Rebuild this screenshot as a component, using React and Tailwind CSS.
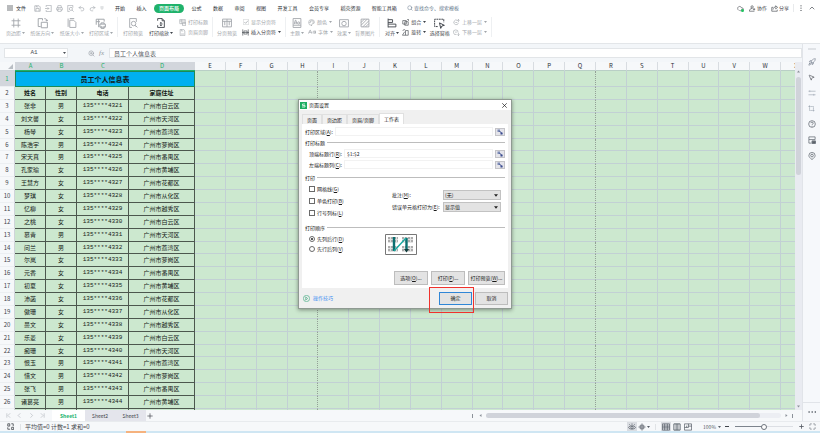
import clsx from 'clsx'
import { CaseSensitive, ChevronUp, CloudCheck, Maximize, MousePointer2, Palette, Printer, Redo2, Rocket, Search, Undo2, ZoomIn } from 'lucide-react'

const names = [
  ['张非', '男'], ['刘文馨', '女'], ['杨琴', '女'], ['陈浩宇', '男'], ['宋天真', '男'], ['孔家瑜', '女'],
  ['王慧方', '女'], ['梦琪', '女'], ['忆柳', '女'], ['之桃', '女'], ['慕青', '男'], ['问兰', '男'],
  ['尔岚', '女'], ['元香', '女'], ['初夏', '女'], ['沛菡', '女'], ['傲珊', '女'], ['曼文', '女'],
  ['乐菱', '女'], ['痴珊', '女'], ['恨玉', '男'], ['惜文', '男'], ['张飞', '男'], ['诸葛亮', '男'],
]
const districts = ['白云', '天河', '荔湾', '萝岗', '番禺', '黄埔', '花都', '从化', '越秀']
const rows = names.map(([name, sex], i) => [name, sex, `135****${4321 + i}`, `广州市${districts[i % 9]}区`])
const columns = 'ABCDEFGHIJKLMNOPQRSTUVWX'.split('')
const emptyColumns = columns.slice(4)

function Glyph({ children, className = 'size-[9px]', box = 18 }) {
  return (
    <svg viewBox={`0 0 ${box} ${box}`} className={clsx('shrink-0', className)} fill="none" stroke="currentColor" strokeWidth="1.6" aria-hidden="true">
      {children}
    </svg>
  )
}

function Caret() {
  return (
    <svg viewBox="0 0 6 4" className="h-[2px] w-[3px] shrink-0" aria-hidden="true">
      <path d="M0 0h6L3 4z" fill="currentColor" />
    </svg>
  )
}

const icons = {
  margins: <Glyph className="size-[10px]"><path d="M5 1v16M13 1v16M1 5h16M1 13h16" /></Glyph>,
  direction: <Glyph className="size-[11px]"><path d="M2 8V1h7v3M2 8v6h4M7 7h10v9H7zM12 1c3 0 4 1 4 4m-2-2 2 2 2-2" /></Glyph>,
  size: <Glyph className="size-[10px]"><path d="M5 4h7l4 4v9H5zM2 1v15M5 1h8" /></Glyph>,
  area: <Glyph className="size-[11px]"><path d="M2 11V2h13v4M2 6h6M6 2v13M8 10h9v5H8zM10 10V8h5v2M10 13v4h5v-4" /></Glyph>,
  preview: <Glyph className="size-[10px]"><path d="M15 7V1H3v16h4M15 16l-2-2" /><circle cx="10" cy="10" r="4" /><path d="m13 13 4 4" /></Glyph>,
  scale: <Glyph className="size-[10px]"><path d="M3 5V1h8l4 4v12H3v-4M11 1v4h4M9 8v6M7 10l2-2 2 2M7 12l2 2 2-2" /></Glyph>,
  pageBreak: <Glyph className="size-[10px]"><path d="M1 2h16v14H1zM9 2v14M1 6h16M5 6v7M13 6v7" /></Glyph>,
  theme: <Glyph className="size-[10px]"><path d="M2 1h14v16H2zM2 13h14M4 11l2-7h1l2 7M5 9h3" /><circle cx="12" cy="9" r="2" /></Glyph>,
  effect: <Glyph className="size-[10px]"><path d="M1 3h16v13H1z" /><circle cx="9" cy="10" r="4" /></Glyph>,
  background: <Glyph className="size-[10px]"><path d="M2 2h14v14H2zM2 8l6-6M2 13 13 2M5 16 16 5M10 16l6-6" /></Glyph>,
  align: <Glyph className="size-[10px]"><path d="M2 1v16M2 3h8v5H2M2 11h14v5H2" /></Glyph>,
  pane: <Glyph className="size-[11px]"><path d="M6 14H1V2h15v5" strokeDasharray="3 1" /><path d="m9 8 8 4-4 1-2 4z" /></Glyph>,
  headers: <Glyph className="size-[7px]"><path d="M2 1h14v11H2zM2 5h14M7 1v11M9 9h8v8H9z" /></Glyph>,
  footer: <Glyph className="size-[7px]"><path d="M3 1h9l3 4v12H3zM5 13h8M6 1v4h5" /></Glyph>,
  insert: <Glyph className="size-[7px]"><path d="M2 1v16M16 1v16M5 5h8v8H5zM0 9h18" /></Glyph>,
  group: <Glyph className="size-[7px]"><path d="M2 4h9v9H2zM7 7h9v9H7zM13 1h4v4" /></Glyph>,
  rotate: <Glyph className="size-[7px]"><path d="M9 4h7v12H9zM9 16H1l6-9M2 5c1-3 3-4 6-3" /></Glyph>,
  layerUp: <Glyph className="size-[7px]"><path d="M12 4a6 6 0 1 0 2 6M14 8V1M11 4l3-3 3 3M6 9h5" /></Glyph>,
  layerDown: <Glyph className="size-[7px]"><path d="M13 9a6 6 0 1 0-4 5M14 10v7M11 14l3 3 3-3M5 8h5" /></Glyph>,
}

function BigTool({ icon, label, menu, dark }) {
  return (
    <button type="button" className={clsx('flex flex-col items-center', dark ? 'text-[#3f444b]' : 'text-[#a2a6ab]')}>
      <span className="flex h-3 items-center">{icon}</span>
      <span className="flex h-2 items-center gap-px">{label}{menu && <Caret />}</span>
    </button>
  )
}

function SmallTool({ icon, label, menu, dark }) {
  return (
    <button type="button" className={clsx('flex h-[10px] items-center gap-[2px]', dark ? 'text-[#3f444b]' : 'text-[#a2a6ab]')}>
      {icon}{label}{menu && <Caret />}
    </button>
  )
}

function MenuBar() {
  const tabs = ['开始', '插入', '页面布局', '公式', '数据', '审阅', '视图', '开发工具', '会员专享', '稻壳资源', '智能工具箱']
  return (
    <div className="flex h-4 shrink-0 items-center pr-1 pl-[7px] text-[#2c3036]">
      <button type="button" className="flex items-center gap-[3px]">
        <Glyph className="size-[6px]"><path d="M0 3h18M0 9h18M0 15h18" strokeWidth="2" /></Glyph>文件
      </button>
      <div className="ml-[8px] flex w-[70px] items-center justify-between text-[#9da2a8]">
        <Glyph className="size-[7px]"><path d="M2 2h11l3 3v11H2zM5 16V9h8v7M6 2v3h5" /></Glyph>
        <Glyph className="size-[7px]"><path d="M3 5V1h13v16H3v-4M0 9h10M7 6l3 3-3 3" /></Glyph>
        <Printer className="size-[7px]" />
        <Glyph className="size-[7px]"><path d="M15 7V1H2v16h5M13 13l4 4" /><circle cx="10" cy="10" r="4" /></Glyph>
        <Undo2 className="size-[7px]" />
        <Redo2 className="size-[7px]" />
        <Glyph className="size-[4px]"><path d="M2 3h14M3 8h12l-6 8z" /></Glyph>
      </div>
      <nav className="ml-[11px] flex w-[282px] items-center justify-between">
        {tabs.map((tab) => (
          <button
            key={tab}
            type="button"
            className={clsx(tab === '页面布局' && '-mx-1 h-[9px] rounded-full bg-[#20b26b] px-[5px] font-medium text-white')}
          >
            {tab}
          </button>
        ))}
      </nav>
      <label className="ml-[10px] flex items-center gap-px text-[#64778b]">
        <Search className="size-[6px]" />
        <input aria-label="查找命令" placeholder="查找命令、搜索模板" className="w-16 outline-none placeholder:text-[#64778b]" />
      </label>
      <div className="ml-auto flex items-center gap-1 text-[#3f444b]">
        <span className="relative mr-px">
          <CloudCheck className="size-[7px]" />
          <span className="absolute right-0 bottom-0 size-[3px] rounded-full bg-[#22c05f]" />
        </span>
        <button type="button" className="flex items-center gap-px">
          <Glyph className="size-[7px]"><circle cx="8" cy="5" r="3" /><path d="M1 16c0-5 3-7 7-7M1 16h13M13 8v6M10 11h6" /></Glyph>协作
        </button>
        <button type="button" className="flex items-center gap-px">
          <Glyph className="size-[7px]"><path d="M6 6H2v10h14v-4M5 12c1-5 4-7 7-7V2l5 4-5 4V7" /></Glyph>分享
        </button>
        <span className="h-2 border-l border-[#e8eaec]" />
        <Glyph className="size-[6px]"><path d="M9 1v3M9 8v3M9 15v3" strokeWidth="3" /></Glyph>
        <ChevronUp className="size-[8px]" />
      </div>
    </div>
  )
}

function Ribbon() {
  return (
    <div className="flex h-7 shrink-0 items-start border-b border-[#e3e6e9] pt-px">
      <div className="flex w-[118px] justify-between border-r border-[#eef0f2] pr-1 pl-[6px]">
        <BigTool icon={icons.margins} label="页边距" menu />
        <BigTool icon={icons.direction} label="纸张方向" menu />
        <BigTool icon={icons.size} label="纸张大小" menu />
        <BigTool icon={icons.area} label="打印区域" menu />
      </div>
      <div className="flex w-[95px] justify-between border-r border-[#eef0f2] pr-1 pl-[5px]">
        <BigTool icon={icons.preview} label="打印预览" />
        <BigTool icon={icons.scale} label="打印缩放" menu dark />
        <div>
          <SmallTool icon={icons.headers} label="打印标题" />
          <SmallTool icon={icons.footer} label="页眉页脚" />
        </div>
      </div>
      <div className="flex w-[73px] justify-between border-r border-[#eef0f2] pr-1 pl-[4px]">
        <BigTool icon={icons.pageBreak} label="分页预览" />
        <div>
          <label className="flex h-[10px] items-center gap-[2px] pl-px text-[#a2a6ab]">
            <input type="checkbox" defaultChecked className="peer sr-only" />
            <Glyph className="size-[6px]"><path d="M1 1h16v16H1z" strokeWidth="1" /><path d="m4 9 4 4 7-8" strokeWidth="2.2" /></Glyph>
            显示分页符
          </label>
          <SmallTool icon={icons.insert} label="插入分页符" menu dark />
        </div>
      </div>
      <div className="flex w-[94px] justify-between border-r border-[#eef0f2] pr-1 pl-[4px]">
        <BigTool icon={icons.theme} label="主题" menu />
        <div>
          <SmallTool icon={<Palette className="size-[7px]" />} label="颜色" menu />
          <SmallTool icon={<CaseSensitive className="size-[8px]" />} label="字体" menu />
        </div>
        <BigTool icon={icons.effect} label="效果" menu />
        <BigTool icon={icons.background} label="背景图片" />
      </div>
      <div className="flex w-[112px] justify-between border-r border-[#eef0f2] pr-1 pl-[5px]">
        <BigTool icon={icons.align} label="对齐" menu dark />
        <div>
          <SmallTool icon={icons.group} label="组合" menu dark />
          <SmallTool icon={icons.rotate} label="旋转" menu dark />
        </div>
        <BigTool icon={icons.pane} label="选择窗格" dark />
        <div>
          <SmallTool icon={icons.layerUp} label="上移一层" menu />
          <SmallTool icon={icons.layerDown} label="下移一层" menu />
        </div>
      </div>
    </div>
  )
}

function FormulaBar() {
  return (
    <div className="flex h-[18px] shrink-0 items-center pl-1 text-[6px] text-[#4a4f56]">
      <div className="flex h-[10px] w-16 items-center border border-[#e2e5e8] bg-white pr-px">
        <input aria-label="名称框" defaultValue="A1" className="w-full min-w-0 text-center font-['Liberation_Mono',monospace] outline-none" />
        <Caret />
      </div>
      <div className="flex w-[41px] items-center justify-end gap-1 pr-[5px] text-[#9297a0]">
        <ZoomIn className="size-[7px]" />
        <span className="font-['Liberation_Serif',serif] text-[7px] italic">fx</span>
      </div>
      <input
        aria-label="编辑栏"
        defaultValue="员工个人信息表"
        className="h-[10px] min-w-0 flex-1 border border-[#e2e5e8] bg-white px-1 outline-none"
      />
    </div>
  )
}

// the printed page ends after these columns
const pageEdge = ['H', 'Q']

function EmptyCells() {
  return emptyColumns.map((col) => (
    <td
      key={col}
      className={clsx('border-r border-b border-[#c2d0d4]', pageEdge.includes(col) && 'border-r-[#93a096] [border-right-style:dotted]')}
    />
  ))
}

function RowHead({ n, active }) {
  return (
    <th className={clsx('border-r border-b border-r-[#cfd4da] border-b-[#eceff2] font-normal', active ? 'bg-[#d2d6dc] text-[#20b26b]' : 'bg-[#f6f8fa] text-[#3f444b]')}>
      {n}
    </th>
  )
}

function Sheet() {
  return (
    <table className="h-[360px] w-[812px] min-w-full table-fixed border-separate border-spacing-0 text-center text-[6px] leading-[8px] text-[#141a16]">
      <colgroup>
        <col className="w-[15px]" />
        <col className="w-[31px]" />
        <col className="w-[31px]" />
        <col className="w-[52px]" />
        <col className="w-[66px]" />
        {emptyColumns.map((col) => <col key={col} />)}
      </colgroup>
      <thead>
        <tr className="h-[9px]">
          <th className="border-b border-b-[#cfd4da] bg-[#f6f8fa]">
            <svg viewBox="0 0 6 6" className="mr-[2px] ml-auto size-[5px]" aria-hidden="true"><path d="M6 0v6H0z" fill="#b9bec4" /></svg>
          </th>
          {columns.map((col, i) => (
            <th
              key={col}
              className={clsx(
                'border-b font-normal',
                i < 4 ? 'border-b-[#20b26b] bg-[#d2d6dc] text-[#20b26b]' : 'border-r border-r-[#d8dce1] border-b-[#b9cfc6] bg-[#f6f8fa] text-[#2c3036]',
              )}
            >
              {col}
            </th>
          ))}
        </tr>
      </thead>
      <tbody>
        <tr className="h-[15px]">
          <RowHead n={1} active />
          <td colSpan={4} className="border border-[#1d8a57] bg-[#00b0f0] text-[7px] font-bold">员工个人信息表</td>
          <EmptyCells />
        </tr>
        <tr className="h-3">
          <RowHead n={2} />
          {['姓名', '性别', '电话', '家庭住址'].map((title) => (
            <td key={title} className="border-r border-b border-[#4c574e] font-bold">{title}</td>
          ))}
          <EmptyCells />
        </tr>
        {rows.map((row, i) => (
          <tr key={row[2]} className="h-3">
            <RowHead n={i + 3} />
            {row.map((value, c) => (
              <td key={c} className={clsx('border-r border-b border-[#4c574e]', c === 2 && "font-['Liberation_Mono',monospace]")}>{value}</td>
            ))}
            <EmptyCells />
          </tr>
        ))}
        <tr className="h-3">
          <RowHead />
          {[0, 1, 2, 3].map((c) => <td key={c} className="border-r border-b border-[#4c574e]" />)}
          <EmptyCells />
        </tr>
      </tbody>
    </table>
  )
}

function VerticalScroll() {
  return (
    <div className="flex w-[7px] shrink-0 flex-col items-center bg-[#e9ebf1] pt-[8px] pb-[2px] text-[#8b9199]">
      <svg viewBox="0 0 6 4" className="size-[3px]" aria-hidden="true"><path d="M0 4h6L3 0z" fill="currentColor" /></svg>
      <div className="mt-1 h-[98px] w-[5px] rounded-full bg-[#d0d3da]" />
      <svg viewBox="0 0 6 4" className="mt-auto size-[3px]" aria-hidden="true"><path d="M0 0h6L3 4z" fill="currentColor" /></svg>
    </div>
  )
}

function RangeField({ id, label, value, mnemonic }) {
  return (
    <div className="flex h-[11px] items-center gap-[2px]">
      <label htmlFor={id} className="shrink-0">{label}(<u>{mnemonic}</u>):</label>
      <input id={id} defaultValue={value} className="h-[9px] min-w-0 flex-1 border border-[#f2f2f2] pl-[2px] outline-none" />
      <button type="button" aria-label="选择区域" className="flex h-[8px] w-[10px] items-center justify-center border border-[#c4c4c8] bg-[#e4e4ea]">
        <svg viewBox="0 0 12 12" className="size-[6px]" aria-hidden="true">
          <path d="M1 1h5v5H1z" fill="#7c8bb5" /><path d="M7 7h4v4H7z" fill="#394a8f" /><path d="m5 4 5 5" stroke="#394a8f" strokeWidth="2" />
        </svg>
      </button>
    </div>
  )
}

function Legend({ children }) {
  return (
    <div className="flex h-[11px] items-center gap-[2px]">
      {children}
      <span className="h-px flex-1 bg-[#bdbdbd]" />
    </div>
  )
}

function CheckRow({ label, mnemonic }) {
  return (
    <label className="flex h-3 items-center gap-[2px]">
      <input type="checkbox" className="size-[6px] appearance-none border border-[#6a6a6a] bg-white" />
      <span>{label}(<u>{mnemonic}</u>)</span>
    </label>
  )
}

function RadioRow({ label, mnemonic, checked }) {
  return (
    <label className="flex h-[10px] items-center gap-[2px]">
      <input
        type="radio"
        name="order"
        defaultChecked={checked}
        className="size-[6px] appearance-none rounded-full border border-[#6a6a6a] bg-white checked:bg-[#222] checked:bg-clip-content checked:p-px"
      />
      <span>{label}(<u>{mnemonic}</u>)</span>
    </label>
  )
}

function SelectRow({ id, label, mnemonic, value }) {
  return (
    <div className="flex h-3 items-center">
      <label htmlFor={id} className="w-[51px] shrink-0 whitespace-nowrap">{label}(<u>{mnemonic}</u>):</label>
      <span className="flex h-[10px] min-w-0 flex-1 items-center border border-[#c2c2c2] bg-[#e3e3e3] pr-[2px] text-[#222]">
        <select id={id} className="w-full min-w-0 appearance-none pl-px outline-none"><option>{value}</option></select>
        <svg viewBox="0 0 6 4" className="h-[3px] w-[4px] shrink-0" aria-hidden="true"><path d="M0 0h6L3 4z" fill="currentColor" /></svg>
      </span>
    </div>
  )
}

function DialogButton({ children, primary, className }) {
  return (
    <button
      type="button"
      className={clsx('border bg-[#e3e3e3] text-center whitespace-nowrap', primary ? 'border-[#2f86d6]' : 'border-[#bdbdbd]', className)}
    >
      {children}
    </button>
  )
}

function PageOrder() {
  return (
    <svg viewBox="0 0 32 21" className="h-[21px] w-8" aria-hidden="true">
      <path d="M.5.5h31v20H.5z" fill="#fff" stroke="#777" />
      <path d="M3 3h10v6H3zM17 3h11v6H17zM3 12h10v6H3zM17 12h11v6H17z" fill="#e2e2e2" />
      <path d="M3 4h10M3 7h10M17 4h11M17 7h11M3 13h10M3 16h10M17 13h11M17 16h11" stroke="#777" strokeDasharray="2 1" />
      <path d="M9 3v14M21.500 4v12" stroke="#0b6f70" strokeWidth="2.400" />
      <path d="M9 17 21 4" stroke="#18a8a0" strokeWidth="1.400" />
      <path d="m19 15 2.500 3.500L24 15z" fill="#123c3c" />
    </svg>
  )
}

function PageSetupDialog() {
  return (
    <div role="dialog" aria-label="页面设置" className="absolute top-[37px] left-[298px] w-[214px] border border-[#8f9a92] bg-[#f0f0f0] text-[#1a1a1a] shadow-[0_1px_4px_rgba(0,0,0,0.4)]">
      <div className="flex h-[10px] items-center bg-white pr-1 pl-px">
        <svg viewBox="0 0 14 14" className="size-[7px]" aria-hidden="true">
          <path d="M0 0h14v14H0z" fill="#1fae63" /><path d="M10 4H5v3h5v3H4" fill="none" stroke="#fff" strokeWidth="1.500" />
        </svg>
        <span className="ml-[2px]">页面设置</span>
        <button type="button" aria-label="关闭" className="ml-auto">
          <Glyph className="size-[5px]"><path d="m1 1 16 16M17 1 1 17" strokeWidth="2.500" /></Glyph>
        </button>
      </div>
      <div className="px-[3px] pt-[3px]">
        <div className="flex items-end">
          {['页面', '页边距', '页眉/页脚', '工作表'].map((tab) => (
            <button
              key={tab}
              type="button"
              className={clsx('border border-b-0 border-[#e0e0e0] px-1', tab === '工作表' ? 'h-[11px] bg-white' : 'h-[10px] bg-[#f0f0f0]')}
            >
              {tab}
            </button>
          ))}
        </div>
        <div className="bg-white px-[3px] pt-[2px] pb-[3px]">
          <RangeField id="print-area" label="打印区域" mnemonic="A" value="" />
          <Legend>打印标题</Legend>
          <div className="pl-[4px]">
            <RangeField id="title-rows" label="顶端标题行" mnemonic="R" value="$1:$2" />
            <RangeField id="title-cols" label="左端标题列" mnemonic="C" value="" />
          </div>
          <div className="pt-[2px]"><Legend>打印</Legend></div>
          <div className="flex justify-between pr-1 pl-[4px]">
            <div>
              <CheckRow label="网格线" mnemonic="G" />
              <CheckRow label="单色打印" mnemonic="B" />
              <CheckRow label="行号列标" mnemonic="L" />
            </div>
            <div className="w-[109px] pt-[6px]">
              <SelectRow id="comments" label="批注" mnemonic="M" value="(无)" />
              <SelectRow id="errors" label="错误单元格打印为" mnemonic="E" value="显示值" />
            </div>
          </div>
          <div className="pt-[3px]"><Legend>打印顺序</Legend></div>
          <div className="flex items-start gap-[41px] pt-px pl-[4px]">
            <div>
              <RadioRow label="先列后行" mnemonic="D" checked />
              <RadioRow label="先行后列" mnemonic="V" />
            </div>
            <PageOrder />
          </div>
          <div className="flex justify-end gap-[3px] pt-4">
            <DialogButton className="h-[14px] w-[34px]">选项(<u>O</u>)...</DialogButton>
            <DialogButton className="h-[14px] w-[34px]">打印(<u>P</u>)...</DialogButton>
            <DialogButton className="h-[14px] w-[37px]">打印预览(<u>W</u>)...</DialogButton>
          </div>
        </div>
        <div className="flex h-5 items-center gap-[3px] pl-px">
          <Glyph className="size-[7px] text-[#3aa77a]"><circle cx="9" cy="9" r="8" /><path d="m7 5 5 4-5 4z" /></Glyph>
          <a href="#tips" className="text-[#3f8ef0]">操作技巧</a>
          <div className="relative ml-auto">
            <DialogButton primary className="h-[13px] w-[33px]">确定</DialogButton>
            <span className="pointer-events-none absolute -top-[5px] -right-[2px] -bottom-[8px] -left-[10px] border border-[#f0322d]" />
          </div>
          <DialogButton className="h-[13px] w-[33px]">取消</DialogButton>
        </div>
      </div>
    </div>
  )
}

function SidePanel() {
  return (
    <aside className="flex w-[18px] shrink-0 flex-col items-center border-l border-[#e1e4e9] bg-[#f6f8fb] text-[#5b626b]">
      <span className="mt-[4px] h-[2px] w-2 bg-[#dfe2e6]" />
      <div className="mt-2 flex flex-col items-center gap-[8px]">
        <Rocket className="size-[8px] text-[#7a8491]" />
        <MousePointer2 className="size-[7px] text-[#3f444b]" />
        <Glyph className="size-[8px] text-[#a4acb7]"><path d="M1 5h16M1 13h16M4 3v4M13 11v4" /></Glyph>
        <Glyph className="size-[7px] text-[#8d97a5]"><path d="M4 1v13h13M1 4h13v13" strokeDasharray="4 1" /></Glyph>
        <Glyph className="size-[8px]"><circle cx="9" cy="9" r="7.500" /><path d="M6 7c0-3 6-3 6 0 0 2-3 2-3 4M9 13v2" /></Glyph>
        <Glyph className="size-[8px]"><path d="M2 8V2h14v6M2 8h14M2 8v8h6M9 11h8v6H9z" /><path d="M10 12h6v4h-6z" fill="currentColor" /></Glyph>
        <Glyph className="size-[8px]"><path d="M9 17c-4-3-7-6-7-9a7 7 0 0 1 14 0c0 3-3 6-7 9z" /><circle cx="9" cy="8" r="3" /></Glyph>
      </div>
      <div className="mt-auto flex h-[19px] w-full items-center justify-center border-t border-[#e1e4e9]">
        <Glyph className="size-[8px]"><path d="M1 9h3M8 9h3M15 9h3" strokeWidth="3" /></Glyph>
      </div>
    </aside>
  )
}

function SheetTabs() {
  return (
    <div className="flex h-[11px] shrink-0 items-center bg-[#f6f8fa] pr-[9px] pl-[6px] text-[#3f444b]">
      <div className="flex w-[39px] justify-between text-[#aab0b7]">
        <Glyph className="size-[5px]"><path d="M3 1v16M15 1 7 9l8 8" strokeWidth="2" /></Glyph>
        <Glyph className="size-[5px]"><path d="M12 1 4 9l8 8" strokeWidth="2" /></Glyph>
        <Glyph className="size-[5px]"><path d="m5 1 8 8-8 8" strokeWidth="2" /></Glyph>
        <Glyph className="size-[5px]"><path d="M15 1v16M3 1l8 8-8 8" strokeWidth="2" /></Glyph>
      </div>
      <button type="button" className="ml-[7px] h-full w-[33px] bg-white font-bold text-[#20b26b]">Sheet1</button>
      <button type="button" className="h-full w-[30px] bg-[#e4e5ec]">Sheet2</button>
      <button type="button" className="h-full w-[31px] bg-[#e4e5ec]">Sheet3</button>
      <button type="button" aria-label="新建工作表" className="ml-px">
        <Glyph className="size-[6px]"><path d="M9 1v16M1 9h16" strokeWidth="2" /></Glyph>
      </button>
      <div className="ml-auto flex w-[321px] items-center gap-[4px] text-[#8b9199]">
        <span className="h-1 w-px bg-[#8b9199]" />
        <svg viewBox="0 0 4 6" className="ml-[2px] size-[3px]" aria-hidden="true"><path d="M4 0v6L0 3z" fill="currentColor" /></svg>
        <div className="h-[5px] flex-1 rounded-full bg-[#eceef3]">
          <div className="h-full w-[93%] rounded-full bg-[#d0d3da]" />
        </div>
        <svg viewBox="0 0 4 6" className="size-[3px]" aria-hidden="true"><path d="M0 0v6l4-3z" fill="currentColor" /></svg>
        <span className="h-1 w-px bg-[#8b9199]" />
      </div>
    </div>
  )
}

function StatusBar() {
  return (
    <div className="flex h-[10px] shrink-0 items-center border-t border-[#e8ebee] bg-[#f6f8fa] pr-1 pl-[7px] text-[#3f444b]">
      <Glyph className="size-[7px]"><path d="M7 2H2v6h5zM2 11v5h6M11 2h5v6M12 11h5v6h-5z" strokeWidth="2" /></Glyph>
      <span className="ml-[6px] h-[6px] border-l border-[#e0e3e6]" />
      <span className="ml-1 text-[6px]">平均值=0 计数=1 求和=0</span>
      <div className="ml-auto flex items-center text-[#555c65]">
        <span className="flex h-[9px] w-[10px] items-center justify-center bg-[#dadde2]">
          <Glyph className="size-[8px]"><path d="M1 10c3-5 13-5 16 0-3 5-13 5-16 0zM9 1v3M3 3l2 2M15 3l-2 2" /><circle cx="9" cy="10" r="2.500" /></Glyph>
        </span>
        <Glyph className="ml-px size-[8px]"><path d="M9 1v16M1 9h16M5 5h8v8H5z" /></Glyph>
        <span className="ml-px"><Caret /></span>
        <span className="mx-[5px] h-[6px] border-l border-[#e0e3e6]" />
        <span className="flex h-[9px] w-[10px] items-center justify-center bg-[#dadde2]">
          <Glyph className="size-[8px]"><path d="M1 2h16v14H1zM1 7h16M1 11h16M6 2v14M12 2v14" /></Glyph>
        </span>
        <Glyph className="ml-[2px] size-[8px]"><path d="M2 2h14v14H2zM7 2v14M11 2v14" strokeWidth="2" /></Glyph>
        <Glyph className="ml-[3px] size-[8px]"><path d="M1 2h16v14H1zM1 10h9V2M6 6v4M10 7h7" /></Glyph>
        <span className="mr-[2px] ml-[11px]">100%</span>
        <Caret />
        <span className="ml-1 h-px w-1 bg-[#3f444b]" />
        <input
          type="range"
          aria-label="缩放"
          defaultValue={50}
          className="mx-[6px] h-[7px] w-[58px] appearance-none bg-[linear-gradient(to_right,#7d848d_50%,#dcdfe4_50%)] bg-[length:100%_1px] bg-center bg-no-repeat [&::-webkit-slider-thumb]:size-[6px] [&::-webkit-slider-thumb]:appearance-none [&::-webkit-slider-thumb]:rounded-full [&::-webkit-slider-thumb]:border [&::-webkit-slider-thumb]:border-[#6d747d] [&::-webkit-slider-thumb]:bg-white"
        />
        <Glyph className="size-[5px]"><path d="M9 1v16M1 9h16" strokeWidth="3" /></Glyph>
        <Maximize className="ml-[5px] size-[7px]" />
      </div>
    </div>
  )
}

export default function App() {
  return (
    <div className="flex h-screen flex-col overflow-hidden bg-white font-['Noto_Sans_CJK_SC','Noto_Sans',sans-serif] text-[5px] leading-[8px]">
      <MenuBar />
      <Ribbon />
      <div className="flex min-h-0 flex-1">
        <div className="flex min-w-0 flex-1 flex-col bg-[#f3f6f9]">
          <FormulaBar />
          <div className="flex min-h-0 flex-1">
            <div className="relative min-w-0 flex-1 overflow-hidden bg-[#cce8cf]">
              <Sheet />
              <PageSetupDialog />
            </div>
            <VerticalScroll />
          </div>
          <SheetTabs />
        </div>
        <SidePanel />
      </div>
      <StatusBar />
      <div className="flex h-[2px] shrink-0 bg-[#cfe6f3]">
        <span className="ml-[126px] w-5 bg-[#f5b27e]" />
      </div>
    </div>
  )
}
